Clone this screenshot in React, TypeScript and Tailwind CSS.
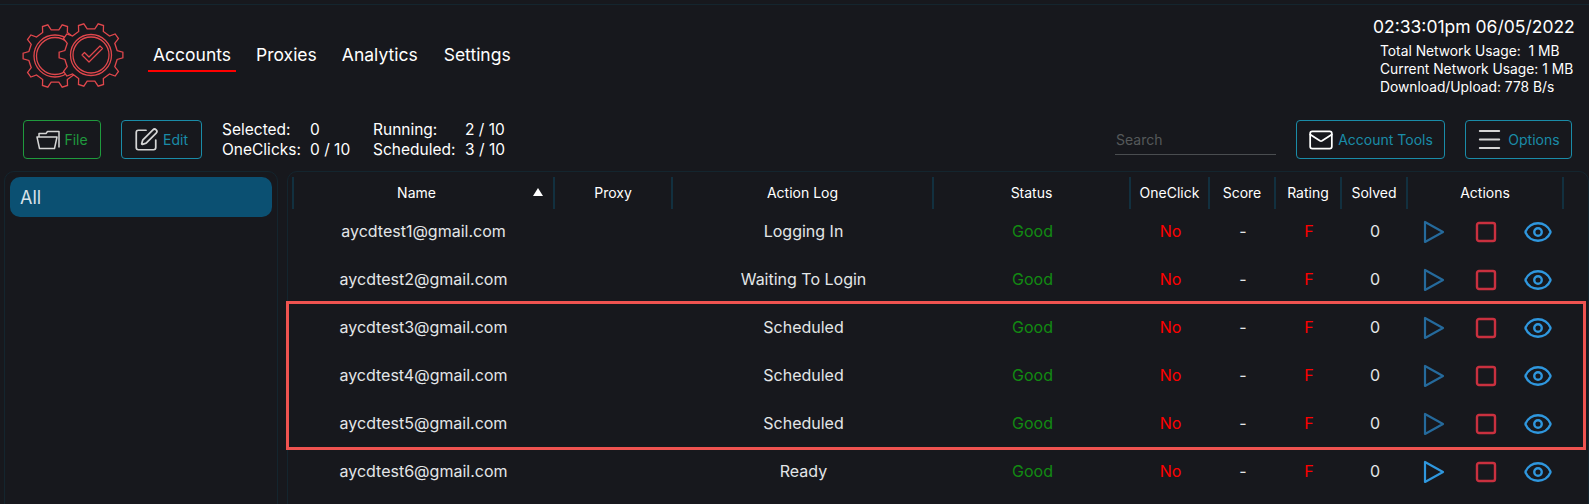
import { Eye, Mail, Menu, Square, SquarePen } from 'lucide-react'
import type { ReactNode } from 'react'

const ROWS = [
  { email: 'aycdtest1@gmail.com', log: 'Logging In' },
  { email: 'aycdtest2@gmail.com', log: 'Waiting To Login' },
  { email: 'aycdtest3@gmail.com', log: 'Scheduled' },
  { email: 'aycdtest4@gmail.com', log: 'Scheduled' },
  { email: 'aycdtest5@gmail.com', log: 'Scheduled' },
  { email: 'aycdtest6@gmail.com', log: 'Ready', ready: true },
]

const COLUMNS = 'grid grid-cols-[263px_118px_261px_197px_79px_66px_66px_66px_156px]'

// Gear outline, teeth are simple trapezoids around the circle. One tooth points right.
function gearPath(cx: number, cy: number, teeth: number, inner: number, outer: number) {
  const step = (Math.PI * 2) / teeth
  const pts: string[] = []
  for (let i = 0; i < teeth; i++) {
    const a = i * step
    const corners: [number, number][] = [
      [a - step * 0.27, inner],
      [a - step * 0.14, outer],
      [a + step * 0.14, outer],
      [a + step * 0.27, inner],
    ]
    for (const [angle, r] of corners) {
      pts.push(`${(cx + Math.cos(angle) * r).toFixed(2)} ${(cy + Math.sin(angle) * r).toFixed(2)}`)
    }
  }
  return `M${pts.join('L')}Z`
}

function Logo() {
  return (
    <svg width="104" height="68" viewBox="0 0 104 68" fill="none" stroke="#e0474c" strokeWidth="1.3" className="shrink-0">
      <path d={gearPath(33, 34, 10, 26.5, 32)} />
      <circle cx="33" cy="34" r="21" />
      <circle cx="33" cy="34" r="18.5" />
      <path d={gearPath(69, 33, 10, 26.5, 32)} fill="#17181d" />
      <circle cx="69" cy="33" r="20.500" />
      <circle cx="69" cy="33" r="18" />
      <path d="M60 33l2.500-2.500 4.500 4.500 11-11 2.500 2.500-13.500 13.500z" strokeWidth="1.2" strokeLinejoin="round" />
    </svg>
  )
}

function FolderIcon() {
  return (
    <svg width="24" height="20" viewBox="0 0 24 20" fill="none" stroke="#d5d5d5" strokeWidth="1.5" strokeLinejoin="round">
      <path d="M3 7V3.500h7l1.500-2H23v16" />
      <path d="M1 7h20l-2.500 11.500H3.500z" />
    </svg>
  )
}

function PlayIcon({ ready }: { ready?: boolean }) {
  return (
    <svg width="22" height="24" viewBox="0 0 22 24" fill="none" stroke="currentColor" strokeWidth="2.200" strokeLinejoin="round" className={ready ? 'text-[#2f97de]' : 'text-[#256a9c]'}>
      <path d="M2 2v20l18-10z" />
    </svg>
  )
}

function ToolButton({ icon, label, className }: { icon: ReactNode; label: string; className: string }) {
  return (
    <button className={`flex h-[39px] items-center justify-center gap-[4px] rounded-[4px] border text-[14px] ${className}`}>
      {icon}
      {label}
    </button>
  )
}

function HeaderCell({ children, className = '' }: { children?: ReactNode; className?: string }) {
  return (
    <div className={`relative flex h-[32px] items-center justify-center border-r-2 border-[#12303f] pb-[1px] text-[14px] text-white ${className}`}>
      {children}
    </div>
  )
}

function Cell({ children, className = 'text-[#e3e6e8]' }: { children?: ReactNode; className?: string }) {
  return <div className={`flex h-[48px] items-center justify-center pb-[4px] text-[16px] ${className}`}>{children}</div>
}

export default function App() {
  return (
    <div className="relative h-[504px] w-[1589px] overflow-hidden bg-[#17181d] font-['Inter',sans-serif] text-white">
      <div className="mt-[4px] h-px bg-[#14252e]" />

      {/* top bar */}
      <div className="flex h-[87px] items-start justify-between pr-[16px]">
        <div className="flex items-start pl-[22px] pt-[17px]">
          <Logo />
          <nav className="ml-[22px] mt-[20px] flex text-[17.500px]">
            <a className="w-[88px] border-b-2 border-[#ff0000] pb-[2px] text-center">Accounts</a>
            <a className="ml-[20px]">Proxies</a>
            <a className="ml-[25px]">Analytics</a>
            <a className="ml-[26px]">Settings</a>
          </nav>
        </div>
        <div className="w-[200px] whitespace-nowrap pt-[9px]">
          <div className="text-right text-[17.500px] leading-[26px]">02:33:01pm 06/05/2022</div>
          <div className="ml-[7px] mt-[2px] text-[13.800px] leading-[18px]">
            <div>Total Network Usage:&nbsp; 1 MB</div>
            <div>Current Network Usage: 1 MB</div>
            <div>Download/Upload: 778 B/s</div>
          </div>
        </div>
      </div>

      {/* toolbar */}
      <div className="flex h-[79px] items-start pt-[28px]">
        <div className="ml-[23px] flex items-center">
          <ToolButton icon={<FolderIcon />} label="File" className="w-[78px] border-[#1f9a3d] text-[#1f9a3d]" />
          <ToolButton
            icon={<SquarePen size={26} strokeWidth={1.6} className="text-[#d5d5d5]" />}
            label="Edit"
            className="ml-[20px] w-[81px] pr-[2px] border-[#1a8ca8] text-[#1a8ca8]"
          />
        </div>
        <div className="ml-[20px] grid grid-cols-[88px_63px_92px_auto] text-[15.500px] leading-[20px]">
          <span>Selected:</span>
          <span>0</span>
          <span>Running:</span>
          <span>2 / 10</span>
          <span>OneClicks:</span>
          <span>0 / 10</span>
          <span>Scheduled:</span>
          <span>3 / 10</span>
        </div>
        <div className="ml-auto flex items-start pr-[17px]">
          <input
            placeholder="Search"
            className="mt-[4px] h-[31px] w-[161px] border-b border-[#4a4d50] bg-transparent pl-[1px] text-[14px] outline-none placeholder:text-[#55585a]"
          />
          <ToolButton
            icon={<Mail size={26} strokeWidth={1.6} className="text-white" />}
            label="Account Tools"
            className="ml-[20px] w-[149px] border-[#1a8ca8] text-[#1a8ca8]"
          />
          <ToolButton
            icon={<Menu size={29} strokeWidth={1.7} className="text-[#d5d5d5]" />}
            label="Options"
            className="ml-[20px] w-[107px] pr-[2px] border-[#1a8ca8] text-[#1a8ca8]"
          />
        </div>
      </div>

      {/* main panels */}
      <div className="flex h-[340px] items-start pl-[4px]">
        <div className="h-[400px] w-[274px] rounded-[10px] border border-[#14252e] p-[5px]">
          <div className="flex h-[40px] items-center rounded-[10px] bg-[#0b5072] pl-[10px] text-[18px] text-[#d8e2e8]">All</div>
        </div>
        <div className="ml-[9px] h-[400px] flex-1 rounded-[10px] border border-[#14252e] pl-[4px] pt-[5px]">
          <div className={COLUMNS}>
            <HeaderCell className="border-l-2 pr-[14px]">
              Name
              <span className="absolute right-[10px] top-[11px] h-0 w-0 border-x-[5px] border-b-[8px] border-x-transparent border-b-white" />
            </HeaderCell>
            <HeaderCell>Proxy</HeaderCell>
            <HeaderCell>Action Log</HeaderCell>
            <HeaderCell>Status</HeaderCell>
            <HeaderCell>OneClick</HeaderCell>
            <HeaderCell>Score</HeaderCell>
            <HeaderCell>Rating</HeaderCell>
            <HeaderCell>Solved</HeaderCell>
            <HeaderCell>Actions</HeaderCell>
          </div>
          {ROWS.map((row) => (
            <div key={row.email} className={COLUMNS}>
              <Cell>{row.email}</Cell>
              <Cell />
              <Cell>{row.log}</Cell>
              <Cell className="text-[#128a12]">Good</Cell>
              <Cell className="text-[#ff0000]">No</Cell>
              <Cell>-</Cell>
              <Cell className="text-[#ff0000]">F</Cell>
              <Cell>0</Cell>
              <div className="flex h-[48px] items-center justify-center pb-[2px]">
                <div className="flex w-[53px] justify-center">
                  <PlayIcon ready={row.ready} />
                </div>
                <div className="flex w-[53px] justify-center">
                  <Square size={24} strokeWidth={2.4} className="text-[#c9303f]" />
                </div>
                <div className="flex w-[53px] justify-center">
                  <Eye size={30} strokeWidth={1.9} className="text-[#2f97de]" />
                </div>
              </div>
            </div>
          ))}
        </div>
      </div>

      {/* annotation around the scheduled rows */}
      <div className="absolute left-[286px] top-[301px] h-[149px] w-[1300px] border-[3px] border-[#ef5350]" />
    </div>
  )
}
